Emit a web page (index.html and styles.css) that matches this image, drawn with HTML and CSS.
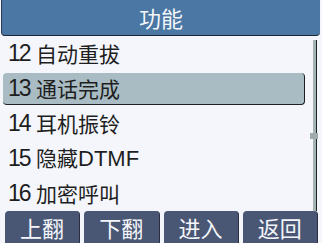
FILE: index.html
```html
<!DOCTYPE html>
<html lang="zh">
<head>
<meta charset="utf-8">
<title>功能</title>
<link rel="stylesheet" href="styles.css">
</head>
<body>
<div class="screen">
  <div class="header">功能</div>
  <div class="main">
    <ul class="list">
      <li class="row"><span class="num">12</span><span class="label">自动重拔</span></li>
      <li class="row selected"><span class="num">13</span><span class="label">通话完成</span></li>
      <li class="row"><span class="num">14</span><span class="label">耳机振铃</span></li>
      <li class="row"><span class="num">15</span><span class="label">隐藏<span class="latin">DTMF</span></span></li>
      <li class="row"><span class="num">16</span><span class="label">加密呼叫</span></li>
    </ul>
    <div class="scrollbar"><div class="thumb"></div></div>
  </div>
  <div class="softkeys">
    <div class="key">上翻</div>
    <div class="key">下翻</div>
    <div class="key">进入</div>
    <div class="key">返回</div>
  </div>
</div>
</body>
</html>
```
FILE: styles.css
```css
html, body {
  margin: 0;
  padding: 0;
  width: 322px;
  height: 243px;
  overflow: hidden;
  background: #f4f6fb;
}
.screen {
  width: 322px;
  height: 243px;
  display: flex;
  flex-direction: column;
  font-family: "Liberation Sans", "Noto Sans CJK SC", sans-serif;
  color: #1e1e1e;
}
.header {
  height: 35px;
  margin: 0 2px 0 1px;
  background: #4a77a3;
  border-left: 1px solid #2d3d52;
  border-bottom: 1px solid #1d2633;
  border-radius: 0 0 4px 4px;
  color: #f4f6fb;
  font-family: "Noto Sans CJK SC", sans-serif;
  font-size: 22px;
  line-height: 35px;
  text-align: center;
}
.main {
  flex: 1;
  display: flex;
  position: relative;
}
.list {
  list-style: none;
  margin: 0;
  padding: 0;
  flex: 1;
  display: flex;
  flex-direction: column;
}
.row {
  height: 35px;
  display: flex;
  align-items: center;
  padding-left: 8px;
  box-sizing: border-box;
}
.row.selected {
  height: 32px;
  margin: 2px 8px 1px 3px;
  padding-left: 5px;
  background: #a9bcc3;
  border-right: 1px solid #1a1f24;
  border-bottom: 1px solid #1a1f24;
  border-radius: 4px;
}
.num {
  font-family: "Liberation Sans Narrow", "Liberation Sans", sans-serif;
  font-size: 23px;
  width: 28px;
  letter-spacing: -2px;
}
.label {
  font-family: "Noto Sans CJK SC", sans-serif;
  font-size: 21px;
  line-height: 1;
}
.latin {
  font-family: "Liberation Sans Narrow", "Liberation Sans", sans-serif;
  font-size: 22px;
}
.scrollbar {
  width: 3px;
  margin: 4px 5px 0 0;
  background: #a6b3b3;
  border-right: 1px solid #1c2226;
  position: relative;
}
.thumb {
  position: absolute;
  left: -3px;
  top: 93px;
  width: 8px;
  height: 6px;
  background: #a0acaf;
}
.softkeys {
  height: 32px;
  display: flex;
  gap: 4px;
  padding: 0 4px 0 5px;
}
.key {
  flex: 1;
  background: #4a5774;
  border-radius: 4px 4px 0 0;
  border-right: 1px solid #2a3040;
  color: #f4f6fb;
  font-family: "Noto Sans CJK SC", sans-serif;
  font-size: 22px;
  line-height: 32px;
  text-align: center;
}
```
